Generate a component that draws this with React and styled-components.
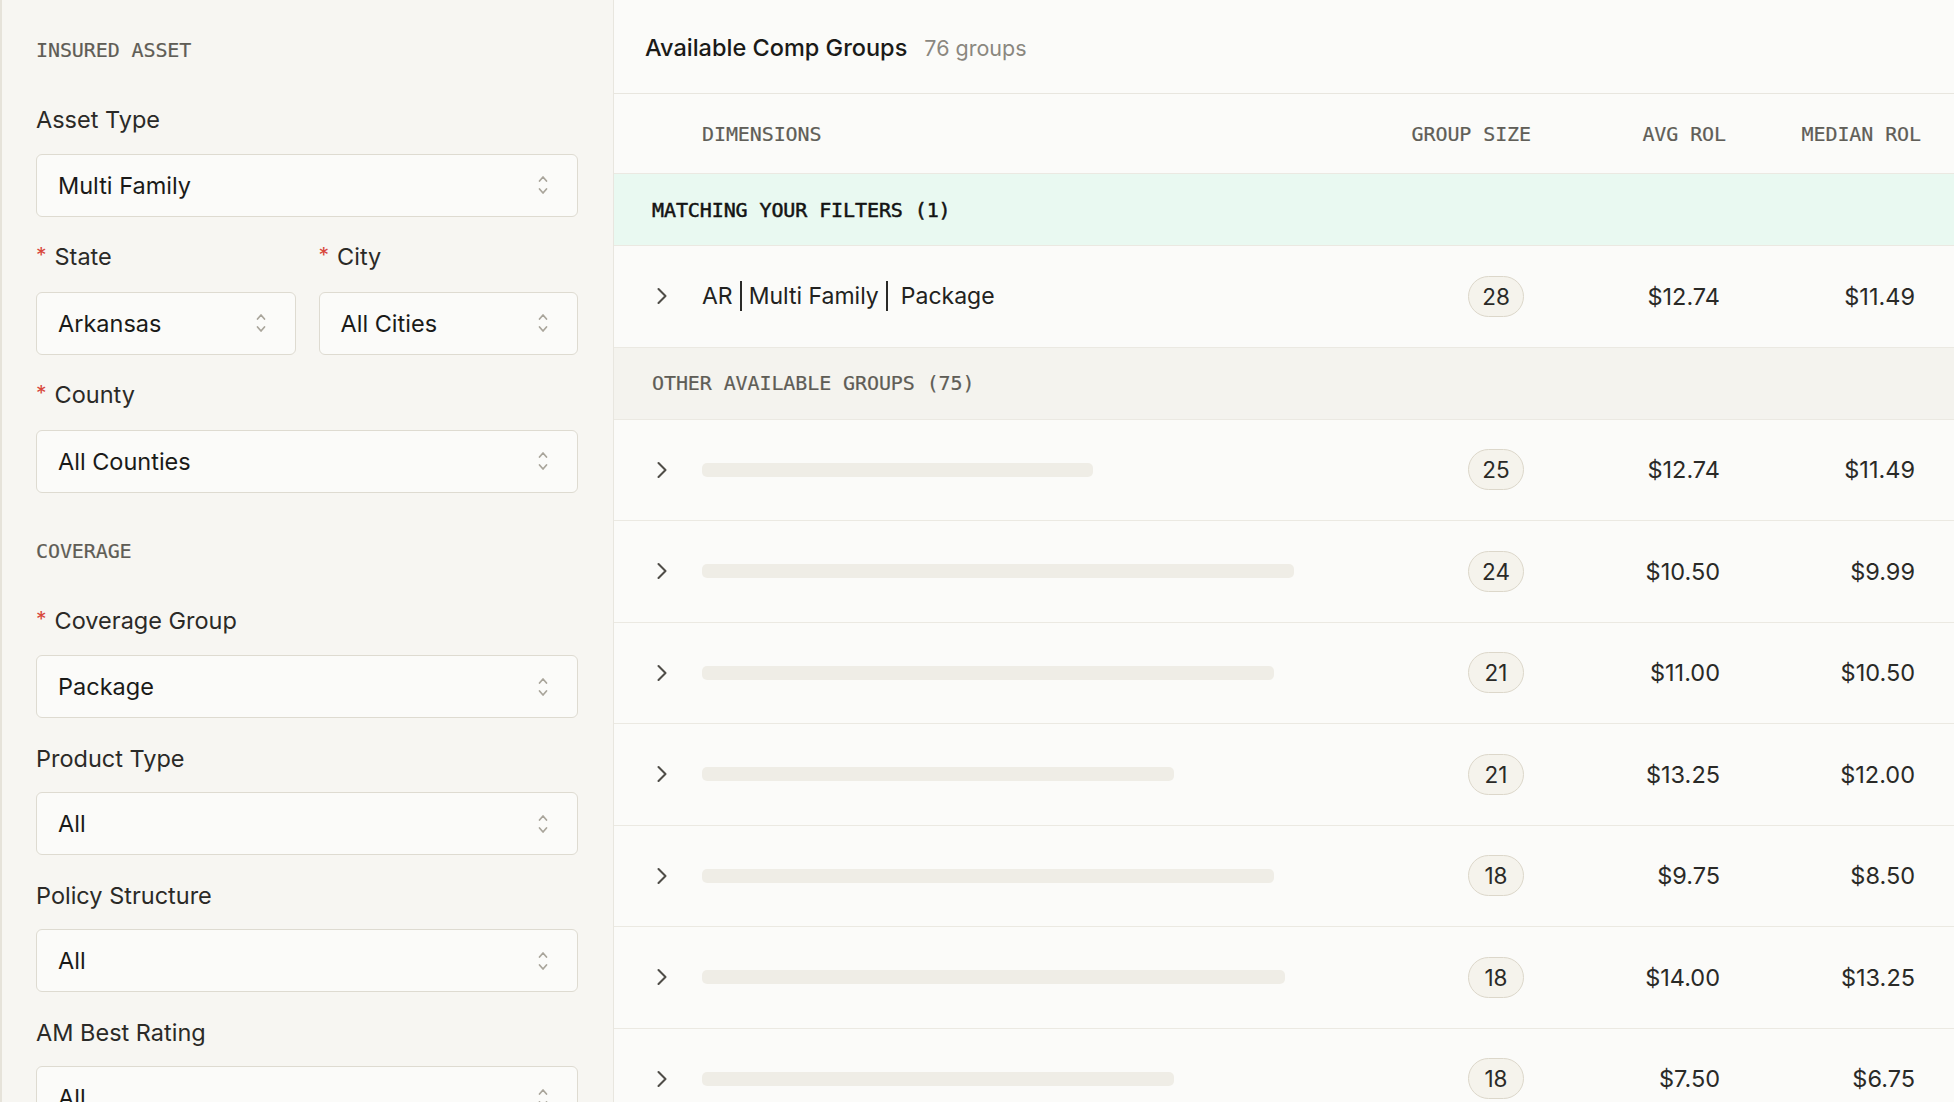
import * as React from 'react';
import styled, { createGlobalStyle } from 'styled-components';
import { ChevronRight } from 'lucide-react';

const GlobalStyle = createGlobalStyle`
    html, body {
        margin: 0;
        padding: 0;
        height: 100%;
        overflow: hidden;
        background: #fbfbf9;
    }
    * {
        box-sizing: border-box;
    }
`

const Page = styled.div`
    display: grid;
    grid-template-columns: 614px 1fr;
    height: 100vh;
    overflow: hidden;
    font-family: Inter, "Noto Sans", sans-serif;
    color: #1e1e1c;
`

const Sidebar = styled.aside`
    background: #f7f6f2;
    border-left: 2px solid #e6e3da;
    border-right: 1px solid #e8e6df;
    padding: 38px 35px 0 34px;
    display: flex;
    flex-direction: column;
    gap: 46px;
    overflow: hidden;
`

const Section = styled.section`
    display: flex;
    flex-direction: column;
`

const mono = `
    font-family: "DejaVu Sans Mono", "Liberation Mono", monospace;
    font-weight: normal;
    font-size: 20px;
    letter-spacing: -0.1px;
    -webkit-text-stroke: 0.2px currentColor;
`

const SectionTitle = styled.h3`
    ${mono}
    margin: 0 0 44px 0;
    line-height: 24px;
    color: #5f5d56;
`

const Fields = styled.div`
    display: flex;
    flex-direction: column;
    gap: 26.5px;
`

const Pair = styled.div`
    display: grid;
    grid-template-columns: 1fr 1fr;
    gap: 23px;
`

const Field = styled.div`
    display: flex;
    flex-direction: column;
    gap: 19.5px;
    min-width: 0;
`

const Label = styled.label`
    font-size: 23.5px;
    line-height: 28px;
    color: #2b2a27;
`

const Required = styled.span`
    color: #d8473b;
    font-size: 21px;
    margin-right: 8px;
    position: relative;
    top: -2px;
`

const SelectBox = styled.div`
    height: 63px;
    border: 1.5px solid #dedbd1;
    border-radius: 6px;
    background: #fbfbf9;
    display: flex;
    align-items: center;
    justify-content: space-between;
    padding: 0 28px 0 21px;
    font-size: 23.5px;
    color: #1a1a18;
`

const UpDown = () => (
    <svg width="12" height="22" viewBox="0 0 12 22" fill="none" stroke="#a9a59b" strokeWidth="1.7" strokeLinecap="round" strokeLinejoin="round">
        <path d="M2.5 7 L6 3 L9.5 7" />
        <path d="M2.5 15 L6 19 L9.5 15" />
    </svg>
)

const Select = ({ label, value, required }) => (
    <Field>
        <Label>{required && <Required>*</Required>}{label}</Label>
        <SelectBox>
            <span>{value}</span>
            <UpDown />
        </SelectBox>
    </Field>
)

const Main = styled.main`
    display: flex;
    flex-direction: column;
    overflow: hidden;
    background: #fbfbf9;
`

const Header = styled.header`
    height: 94px;
    flex-shrink: 0;
    display: flex;
    align-items: center;
    gap: 17px;
    padding: 2px 31px 0;
    border-bottom: 1px solid #e8e6df;
`

const Title = styled.h2`
    margin: 0;
    font-size: 23.5px;
    font-weight: 500;
    color: #1a1a18;
`

const Count = styled.span`
    font-size: 21.5px;
    color: #8a877f;
`

const GridRow = styled.div`
    display: grid;
    grid-template-columns: 60px 1fr 195px 195px 195px;
    align-items: center;
    padding: 0 33px 0 28px;
    flex-shrink: 0;
    border-bottom: 1px solid #ebe9e2;
`

const HeadRow = styled(GridRow)`
    height: 80px;
`

const HeadCell = styled.div`
    ${mono}
    color: #605e57;
    text-align: ${p => (p.$right ? 'right' : 'left')};
`

const Band = styled.div`
    ${mono}
    height: 72px;
    flex-shrink: 0;
    display: flex;
    align-items: center;
    padding-left: 38px;
    background: ${p => (p.$match ? '#e9f9f1' : '#f4f3ee')};
    border-bottom: 1px solid #ebe9e2;
    color: ${p => (p.$match ? '#141413' : '#5f5d56')};
    -webkit-text-stroke: ${p => (p.$match ? '0.5px' : '0.2px')} currentColor;
`

const DataRow = styled(GridRow)`
    height: 101.5px;
`

const Toggle = styled.div`
    display: flex;
    align-items: center;
    color: #4f4d48;
    padding-left: 6px;
`

const Dims = styled.div`
    font-size: 23px;
    color: #222220;
    display: flex;
    align-items: center;
`

const Sep = styled.span`
    display: inline-block;
    width: 2px;
    height: 30px;
    background: #2a2a28;
    margin: ${p => (p.$wide ? '0 13px 0 7px' : '0 7px')};
`

const Skeleton = styled.div`
    height: 14px;
    border-radius: 5px;
    background: #efede6;
`

const Value = styled.div`
    text-align: right;
    padding-right: 6px;
    font-size: 23.5px;
    color: #2a2a27;
`

const SizeCell = styled.div`
    display: flex;
    justify-content: flex-end;
    padding-right: 7px;
`

const Badge = styled.span`
    min-width: 56px;
    height: 41px;
    border-radius: 999px;
    border: 1.5px solid #dcd7ca;
    background: #f5f3ec;
    display: inline-flex;
    align-items: center;
    justify-content: center;
    font-size: 22.5px;
    color: #2a2a27;
`

const others = [
    { w: 391, size: 25, avg: '$12.74', med: '$11.49' },
    { w: 592, size: 24, avg: '$10.50', med: '$9.99' },
    { w: 572, size: 21, avg: '$11.00', med: '$10.50' },
    { w: 472, size: 21, avg: '$13.25', med: '$12.00' },
    { w: 572, size: 18, avg: '$9.75', med: '$8.50' },
    { w: 583, size: 18, avg: '$14.00', med: '$13.25' },
    { w: 472, size: 18, avg: '$7.50', med: '$6.75' },
];

const App = () => {
    return (
        <Page>
            <GlobalStyle />
            <Sidebar>
                <Section>
                    <SectionTitle>INSURED ASSET</SectionTitle>
                    <Fields>
                        <Select label="Asset Type" value="Multi Family" />
                        <Pair>
                            <Select label="State" value="Arkansas" required />
                            <Select label="City" value="All Cities" required />
                        </Pair>
                        <Select label="County" value="All Counties" required />
                    </Fields>
                </Section>
                <Section>
                    <SectionTitle>COVERAGE</SectionTitle>
                    <Fields>
                        <Select label="Coverage Group" value="Package" required />
                        <Select label="Product Type" value="All" />
                        <Select label="Policy Structure" value="All" />
                        <Select label="AM Best Rating" value="All" />
                    </Fields>
                </Section>
            </Sidebar>

            <Main>
                <Header>
                    <Title>Available Comp Groups</Title>
                    <Count>76 groups</Count>
                </Header>
                <HeadRow>
                    <div />
                    <HeadCell>DIMENSIONS</HeadCell>
                    <HeadCell $right>GROUP SIZE</HeadCell>
                    <HeadCell $right>AVG ROL</HeadCell>
                    <HeadCell $right>MEDIAN ROL</HeadCell>
                </HeadRow>

                <Band $match>MATCHING YOUR FILTERS (1)</Band>
                <DataRow>
                    <Toggle><ChevronRight size={28} strokeWidth={1.8} /></Toggle>
                    <Dims>AR<Sep />Multi Family<Sep $wide />Package</Dims>
                    <SizeCell><Badge>28</Badge></SizeCell>
                    <Value>$12.74</Value>
                    <Value>$11.49</Value>
                </DataRow>

                <Band>OTHER AVAILABLE GROUPS (75)</Band>
                {others.map((r, i) => (
                    <DataRow key={i}>
                        <Toggle><ChevronRight size={28} strokeWidth={1.8} /></Toggle>
                        <div><Skeleton style={{ width: r.w }} /></div>
                        <SizeCell><Badge>{r.size}</Badge></SizeCell>
                        <Value>{r.avg}</Value>
                        <Value>{r.med}</Value>
                    </DataRow>
                ))}
            </Main>
        </Page>
    );
};

export default App;
